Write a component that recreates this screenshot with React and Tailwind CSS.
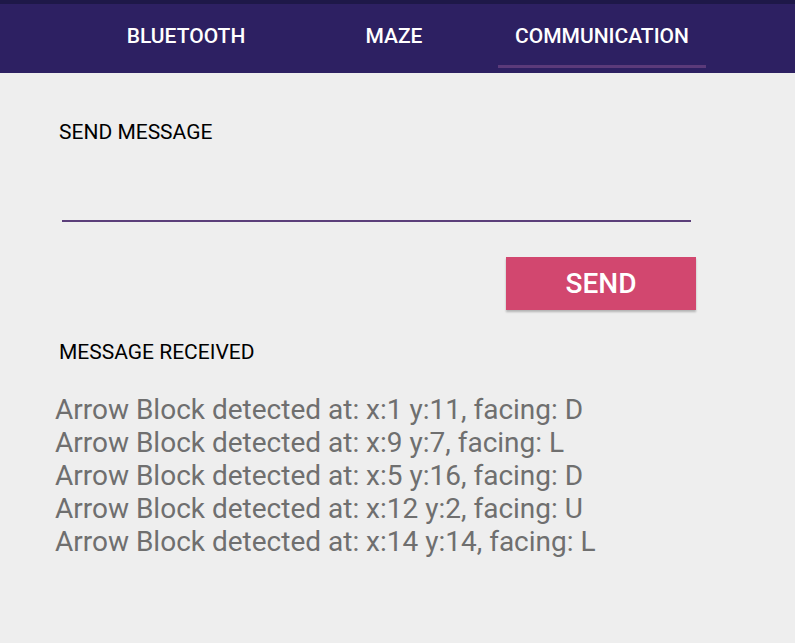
import React, { useState } from "react";

const messages = [
  "Arrow Block detected at: x:1 y:11, facing: D",
  "Arrow Block detected at: x:9 y:7, facing: L",
  "Arrow Block detected at: x:5 y:16, facing: D",
  "Arrow Block detected at: x:12 y:2, facing: U",
  "Arrow Block detected at: x:14 y:14, facing: L",
];

const tabs = ["BLUETOOTH", "MAZE", "COMMUNICATION"];

export default function App() {
  const [active, setActive] = useState(2);
  const [text, setText] = useState("");

  return (
    <div className="min-h-[643px] bg-[#eeeeee] font-['Roboto',sans-serif]">
      {/* top bar with tabs */}
      <div className="h-[73px] bg-[#2d2062] border-t-4 border-[#1e1848]">
        <div className="flex pl-[82px] h-full">
          {tabs.map((t, i) => (
            <button
              key={t}
              onClick={() => setActive(i)}
              className="w-[208px] h-full flex flex-col items-center"
            >
              <span className="mt-[20px] h-[25px] leading-[25px] text-[21px] font-medium text-white">
                {t}
              </span>
              <span
                className={
                  "mt-auto mb-[5px] w-full h-[3px] " +
                  (active === i ? "bg-[#5b3a7a]" : "bg-transparent")
                }
              />
            </button>
          ))}
        </div>
      </div>

      <div className="pl-[59px] pr-[99px]">
        <div className="mt-[47px] text-[21px] leading-[24px] text-black">SEND MESSAGE</div>

        <input
          value={text}
          onChange={(e) => setText(e.target.value)}
          className="block ml-[3px] mt-[50px] w-[629px] h-[28px] bg-transparent border-b-2 border-[#5b3f7a] outline-none text-[20px]"
        />

        <div className="flex justify-end mt-[35px]">
          <button className="w-[190px] h-[53px] bg-[#d2476f] text-white text-[28px] font-medium shadow-[0_2px_2px_rgba(0,0,0,0.25)]">
            SEND
          </button>
        </div>

        <div className="mt-[30px] text-[21px] leading-[24px] text-black">MESSAGE RECEIVED</div>

        <div className="mt-[29px] -ml-[4px]">
          {messages.map((m, i) => (
            <div key={i} className="text-[28px] leading-[33px] text-[#6f6f6f]">
              {m}
            </div>
          ))}
        </div>
      </div>
    </div>
  );
}
